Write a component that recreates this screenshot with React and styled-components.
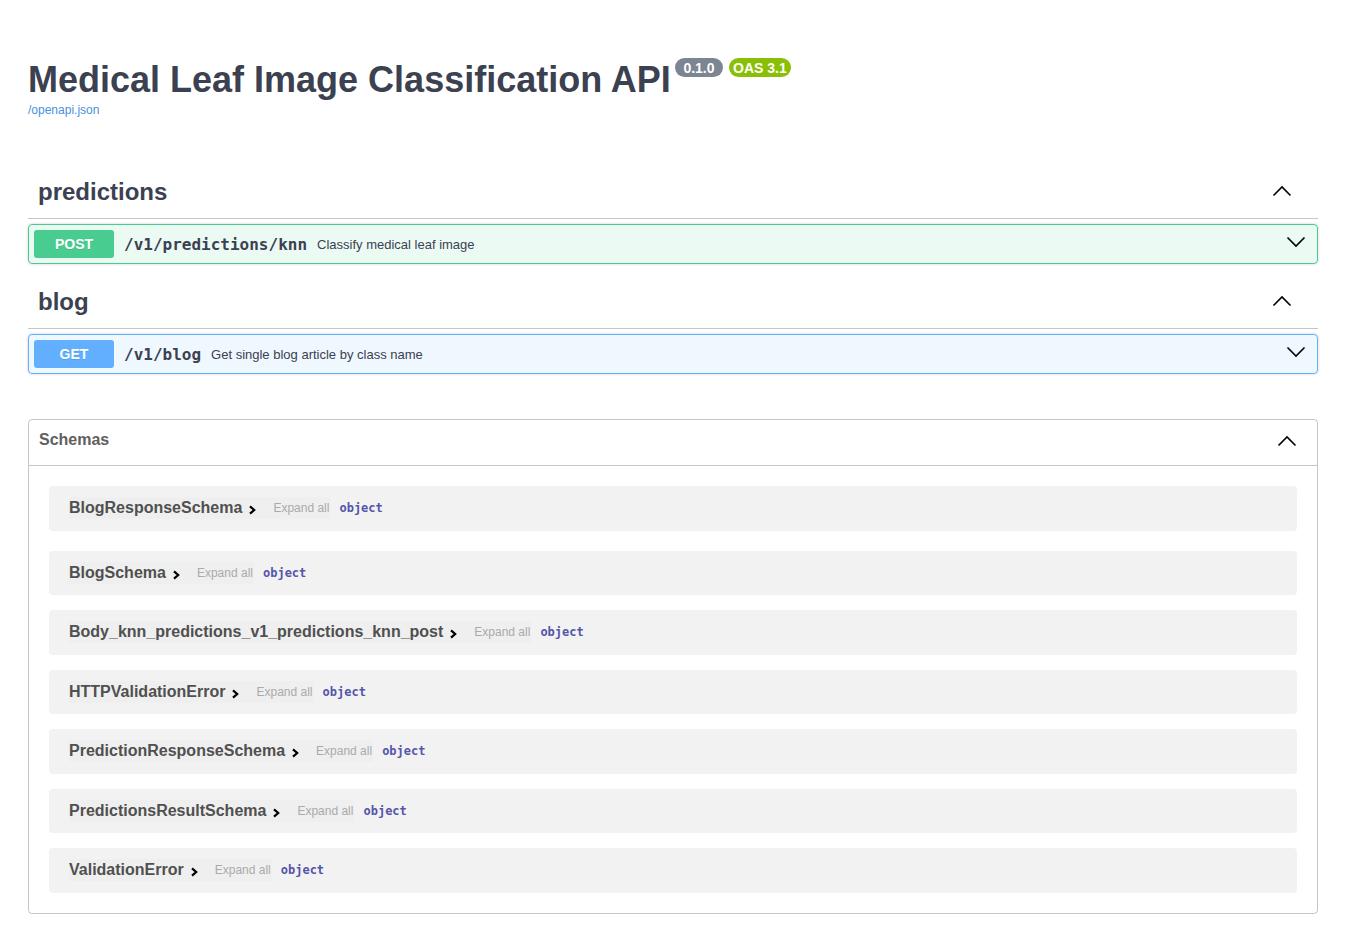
import React from "react";
import styled, { createGlobalStyle } from "styled-components";

const Global = createGlobalStyle`
  html, body { margin: 0; padding: 0; background: #fff; }
  body { font-family: "Liberation Sans", Arial, sans-serif; color: #3b4151; }
  * { box-sizing: border-box; }
`;

const Wrapper = styled.div`
  padding: 0 28px;
`;

const Info = styled.div`
  padding-top: 59px;
  margin-bottom: 52px;
`;

const TitleRow = styled.div`
  display: flex;
  align-items: flex-start;
`;

const Title = styled.h2`
  margin: 0;
  font-size: 36px;
  font-weight: 700;
  line-height: normal;
  color: #3b4151;
`;

const Badges = styled.div`
  display: flex;
  gap: 6px;
  margin-left: 4px;
  margin-top: -1px;
`;

const Badge = styled.span`
  display: inline-flex;
  align-items: center;
  height: 19px;
  padding: 0 ${(p) => p.$pad}px;
  border-radius: 57px;
  background: ${(p) => p.$bg};
  color: #fff;
  font-size: 14px;
  font-weight: 700;
`;

const SpecLink = styled.a`
  display: block;
  margin-top: 2px;
  font-size: 12px;
  line-height: normal;
  color: #4990e2;
  text-decoration: none;
`;

const TagSection = styled.section`
  display: flex;
  flex-direction: column;
`;

const TagHeader = styled.div`
  display: flex;
  align-items: center;
  padding: 8px 20px 11px 10px;
  border-bottom: 1px solid rgba(59, 65, 81, 0.3);
  margin-bottom: 5px;
`;

const TagTitle = styled.h3`
  flex: 1;
  margin: 0;
  font-size: 24px;
  font-weight: 700;
  line-height: 30px;
  color: #3b4151;
`;

const Arrow = styled.svg`
  flex: none;
  margin-right: ${(p) => p.$mr ?? 6}px;
  margin-top: ${(p) => p.$mt ?? 0}px;
`;

const Opblock = styled.div`
  border: 1px solid ${(p) => p.$color};
  background: ${(p) => p.$bg};
  border-radius: 4px;
  box-shadow: 0 0 3px rgba(0, 0, 0, 0.19);
  margin-bottom: 15px;
`;

const Summary = styled.div`
  display: flex;
  align-items: center;
  padding: 5px;
`;

const Method = styled.span`
  min-width: 80px;
  padding: 6px 0;
  border-radius: 3px;
  background: ${(p) => p.$color};
  color: #fff;
  font-size: 14px;
  font-weight: 700;
  line-height: normal;
  text-align: center;
  text-shadow: 0 1px 0 rgba(0, 0, 0, 0.1);
`;

const Path = styled.span`
  padding: 0 10px;
  font-family: "DejaVu Sans Mono", monospace;
  font-size: 16px;
  font-weight: 600;
  color: #3b4151;
`;

const Desc = styled.span`
  flex: 1;
  font-size: 13px;
  color: #3b4151;
`;

const Models = styled.section`
  border: 1px solid rgba(59, 65, 81, 0.3);
  border-radius: 4px;
  margin: 30px 0;
  padding-bottom: 20px;
`;

const ModelsHeader = styled.div`
  display: flex;
  align-items: flex-start;
  height: 46px;
  padding: 11px 20px 10px 10px;
  border-bottom: 1px solid rgba(59, 65, 81, 0.3);
`;

const ModelsLabel = styled.h4`
  flex: 1;
  margin: 0;
  font-size: 16px;
  font-weight: 700;
  line-height: normal;
  color: #606060;
`;

const ModelContainer = styled.div`
  display: flex;
  align-items: center;
  height: 44.5px;
  padding: 0 20px;
  margin: 0 20px 15px;
  background: rgba(0, 0, 0, 0.05);
  border-radius: 4px;
  &:first-child {
    margin: 20px;
  }
  &:last-child {
    margin-bottom: 0;
  }
`;

const TitleButton = styled.span`
  display: flex;
  align-items: center;
  height: 22px;
  padding-right: 8px;
  background: rgba(0, 0, 0, 0.012);
`;

const ModelTitle = styled.span`
  font-size: 16px;
  font-weight: 700;
  color: #505050;
`;

const Toggle = styled.svg`
  margin-left: 5px;
  margin-top: 4px;
`;

const ExpandAll = styled.span`
  display: flex;
  align-items: center;
  height: 22px;
  padding: 0 1px 0 8px;
  font-size: 12px;
  color: #aaaaaa;
  background: rgba(0, 0, 0, 0.012);
`;

const PropType = styled.span`
  margin-left: 9px;
  font-family: "DejaVu Sans Mono", monospace;
  font-size: 12px;
  font-weight: 600;
  color: #55a;
`;

const UpArrow = (props) => (
  <Arrow width="20" height="20" viewBox="0 0 20 20" {...props}>
    <path d="M1.5 12.5 L10 4 L18.5 12.5" fill="none" stroke="#000" strokeWidth="1.6" />
  </Arrow>
);

const DownArrow = (props) => (
  <Arrow width="20" height="20" viewBox="0 0 20 20" {...props}>
    <path d="M1.5 3.5 L10 12 L18.5 3.5" fill="none" stroke="#000" strokeWidth="1.6" />
  </Arrow>
);

const ops = {
  POST: { color: "#49cc90", bg: "rgba(73,204,144,.1)" },
  GET: { color: "#61affe", bg: "rgba(97,175,254,.1)" },
};

const tags = [
  { name: "predictions", method: "POST", path: "/v1/predictions/knn", desc: "Classify medical leaf image" },
  { name: "blog", method: "GET", path: "/v1/blog", desc: "Get single blog article by class name" },
];

const schemas = [
  "BlogResponseSchema",
  "BlogSchema",
  "Body_knn_predictions_v1_predictions_knn_post",
  "HTTPValidationError",
  "PredictionResponseSchema",
  "PredictionsResultSchema",
  "ValidationError",
];

export default function App() {
  return (
    <>
      <Global />
      <Wrapper>
        <Info>
          <TitleRow>
            <Title>Medical Leaf Image Classification API</Title>
            <Badges>
              <Badge $bg="#7d8492" $pad={8.5}>0.1.0</Badge>
              <Badge $bg="#89bf04" $pad={4}>OAS 3.1</Badge>
            </Badges>
          </TitleRow>
          <SpecLink href="#">/openapi.json</SpecLink>
        </Info>

        {tags.map((t) => (
          <TagSection key={t.name}>
            <TagHeader>
              <TagTitle>{t.name}</TagTitle>
              <UpArrow $mt={2} />
            </TagHeader>
            <Opblock $color={ops[t.method].color} $bg={ops[t.method].bg}>
              <Summary>
                <Method $color={ops[t.method].color}>{t.method}</Method>
                <Path>{t.path}</Path>
                <Desc>{t.desc}</Desc>
                <DownArrow />
              </Summary>
            </Opblock>
          </TagSection>
        ))}

        <Models>
          <ModelsHeader>
            <ModelsLabel>Schemas</ModelsLabel>
            <UpArrow $mr={0} $mt={1.5} />
          </ModelsHeader>
          <div>
            {schemas.map((s) => (
              <ModelContainer key={s}>
                <TitleButton>
                  <ModelTitle>{s}</ModelTitle>
                  <Toggle width="10" height="10" viewBox="0 0 10 10">
                    <path d="M3 1.3 L7.2 5 L3 8.7" fill="none" stroke="#000" strokeWidth="2.2" />
                  </Toggle>
                </TitleButton>
                <ExpandAll>Expand all</ExpandAll>
                <PropType>object</PropType>
              </ModelContainer>
            ))}
          </div>
        </Models>
      </Wrapper>
    </>
  );
}
